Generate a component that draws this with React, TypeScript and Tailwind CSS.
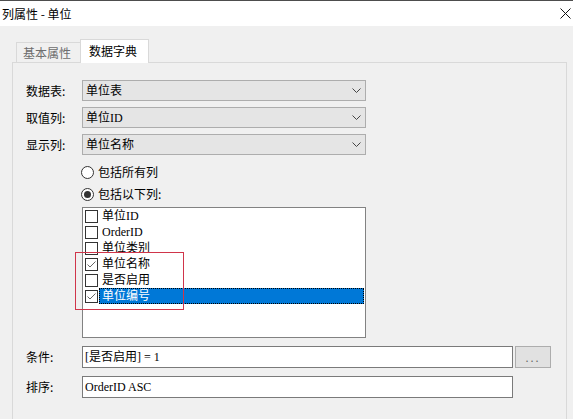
const cjk = { fontFamily: '"Noto Sans CJK SC", sans-serif' };

const items = [
  { label: "单位ID", checked: false },
  { label: "OrderID", checked: false },
  { label: "单位类别", checked: false },
  { label: "单位名称", checked: true },
  { label: "是否启用", checked: false },
  { label: "单位编号", checked: true, selected: true },
];

const Chevron = () => (
  <svg width="9" height="5" viewBox="0 0 9 5" className="mr-[4px]">
    <path d="M0.5 0.5 L4.5 4.5 L8.5 0.5" fill="none" stroke="#444" strokeWidth="1" />
  </svg>
);

const Combo = ({ value }: { value: string }) => (
  <div className="w-[284px] h-[21px] border border-[#adadad] bg-[#e5e5e5] flex items-center justify-between pl-[3px] text-[12px] text-black font-['Liberation_Serif','Noto_Sans_CJK_SC',serif]">
    <span className="leading-none">{value}</span>
    <Chevron />
  </div>
);

const CheckBox = ({ checked }: { checked: boolean }) => (
  <div className="w-[13px] h-[13px] border border-[#333] bg-white shrink-0 flex items-center justify-center">
    {checked && (
      <svg width="11" height="11" viewBox="0 0 11 11">
        <path d="M1.5 5.5 L4 8 L9.5 2.5" fill="none" stroke="#666" strokeWidth="1" />
      </svg>
    )}
  </div>
);

const Radio = ({ checked }: { checked: boolean }) => (
  <div className="w-[13px] h-[13px] rounded-full border border-[#333] bg-white flex items-center justify-center shrink-0">
    {checked && <div className="w-[7px] h-[7px] rounded-full bg-[#333]" />}
  </div>
);

export default function App() {
  return (
    <div className="w-[573px] h-[419px] overflow-hidden flex flex-col bg-[#f0f0f0] text-[12px] text-black" style={cjk}>
      {/* Title bar */}
      <div className="h-[26px] shrink-0 border-t border-[#4d4d4d] bg-white flex items-center justify-between pl-[2px]">
        <span className="leading-none">列属性 - 单位</span>
        <svg width="11" height="11" viewBox="0 0 11 11" className="mr-[2px]">
          <path d="M0.5 0.5 L10.5 10.5 M10.5 0.5 L0.5 10.5" stroke="#111" strokeWidth="1" />
        </svg>
      </div>

      {/* Body */}
      <div className="flex-1 flex flex-col pl-[12px] pr-[6px] pt-[13px]">
        {/* Tabs */}
        <div className="h-[23px] flex items-end pl-[4px] relative z-10">
          <div className="w-[64px] h-[20px] border-l border-t border-[#d9d9d9] flex items-center pl-[6px] text-[#6d6d6d]">
            基本属性
          </div>
          <div className="w-[69px] h-[24px] -mb-px border-l border-t border-r border-[#d9d9d9] bg-white flex items-center pl-[8px] pb-[1px]">
            数据字典
          </div>
        </div>

        {/* Panel */}
        <div className="flex-1 border border-b-0 border-[#d9d9d9] pl-[13px] pt-[17px]">
          <div className="flex flex-col gap-[6px]">
            <div className="flex items-center h-[21px]">
              <span className="w-[56px]">数据表:</span>
              <Combo value="单位表" />
            </div>
            <div className="flex items-center h-[21px]">
              <span className="w-[56px]">取值列:</span>
              <Combo value="单位ID" />
            </div>
            <div className="flex items-center h-[21px]">
              <span className="w-[56px]">显示列:</span>
              <Combo value="单位名称" />
            </div>
          </div>

          <div className="mt-[8px] h-[18px] flex items-center gap-[4px] pl-[55px]">
            <Radio checked={false} />
            <span>包括所有列</span>
          </div>
          <div className="mt-[4px] h-[18px] flex items-center gap-[4px] pl-[55px]">
            <Radio checked />
            <span>包括以下列:</span>
          </div>

          {/* Column list */}
          <div className="mt-[4px] ml-[56px] w-[284px] h-[131px] border border-[#828282] bg-white relative">
            {items.map((it) => (
              <div key={it.label} className="h-[16px] flex items-center pl-[2px]">
                <CheckBox checked={it.checked} />
                <div
                  className={
                    it.selected
                      ? "flex-1 ml-[1px] mr-[1px] h-[16px] flex items-center pl-[2px] bg-[#0078d7] text-white border border-dotted border-black font-['Liberation_Serif','Noto_Sans_CJK_SC',serif]"
                      : "flex-1 ml-[1px] mr-[1px] h-[16px] flex items-center pl-[3px] font-['Liberation_Serif','Noto_Sans_CJK_SC',serif]"
                  }
                >
                  {it.label}
                </div>
              </div>
            ))}
            <div className="absolute left-[-8px] top-[44px] w-[109px] h-[58px] border border-[#d0354a] pointer-events-none" />
          </div>

          {/* Condition */}
          <div className="mt-[8px] flex items-center h-[22px]">
            <span className="w-[56px]">条件:</span>
            <div className="w-[431px] h-[22px] border border-[#7a7a7a] bg-white flex items-center pl-[2px] font-['Liberation_Serif','Noto_Sans_CJK_SC',serif]">
              [是否启用] = 1
            </div>
            <button className="ml-[2px] w-[36px] h-[22px] border border-[#adadad] bg-[#e1e1e1] text-[#666] text-[11px] leading-none flex items-center justify-center tracking-[2px]">
              ...
            </button>
          </div>

          {/* Sort */}
          <div className="mt-[8px] flex items-center h-[22px]">
            <span className="w-[56px]">排序:</span>
            <div className="w-[431px] h-[22px] border border-[#7a7a7a] bg-white flex items-center pl-[2px] font-['Liberation_Serif','Noto_Sans_CJK_SC',serif]">
              OrderID ASC
            </div>
          </div>
        </div>
      </div>
    </div>
  );
}
